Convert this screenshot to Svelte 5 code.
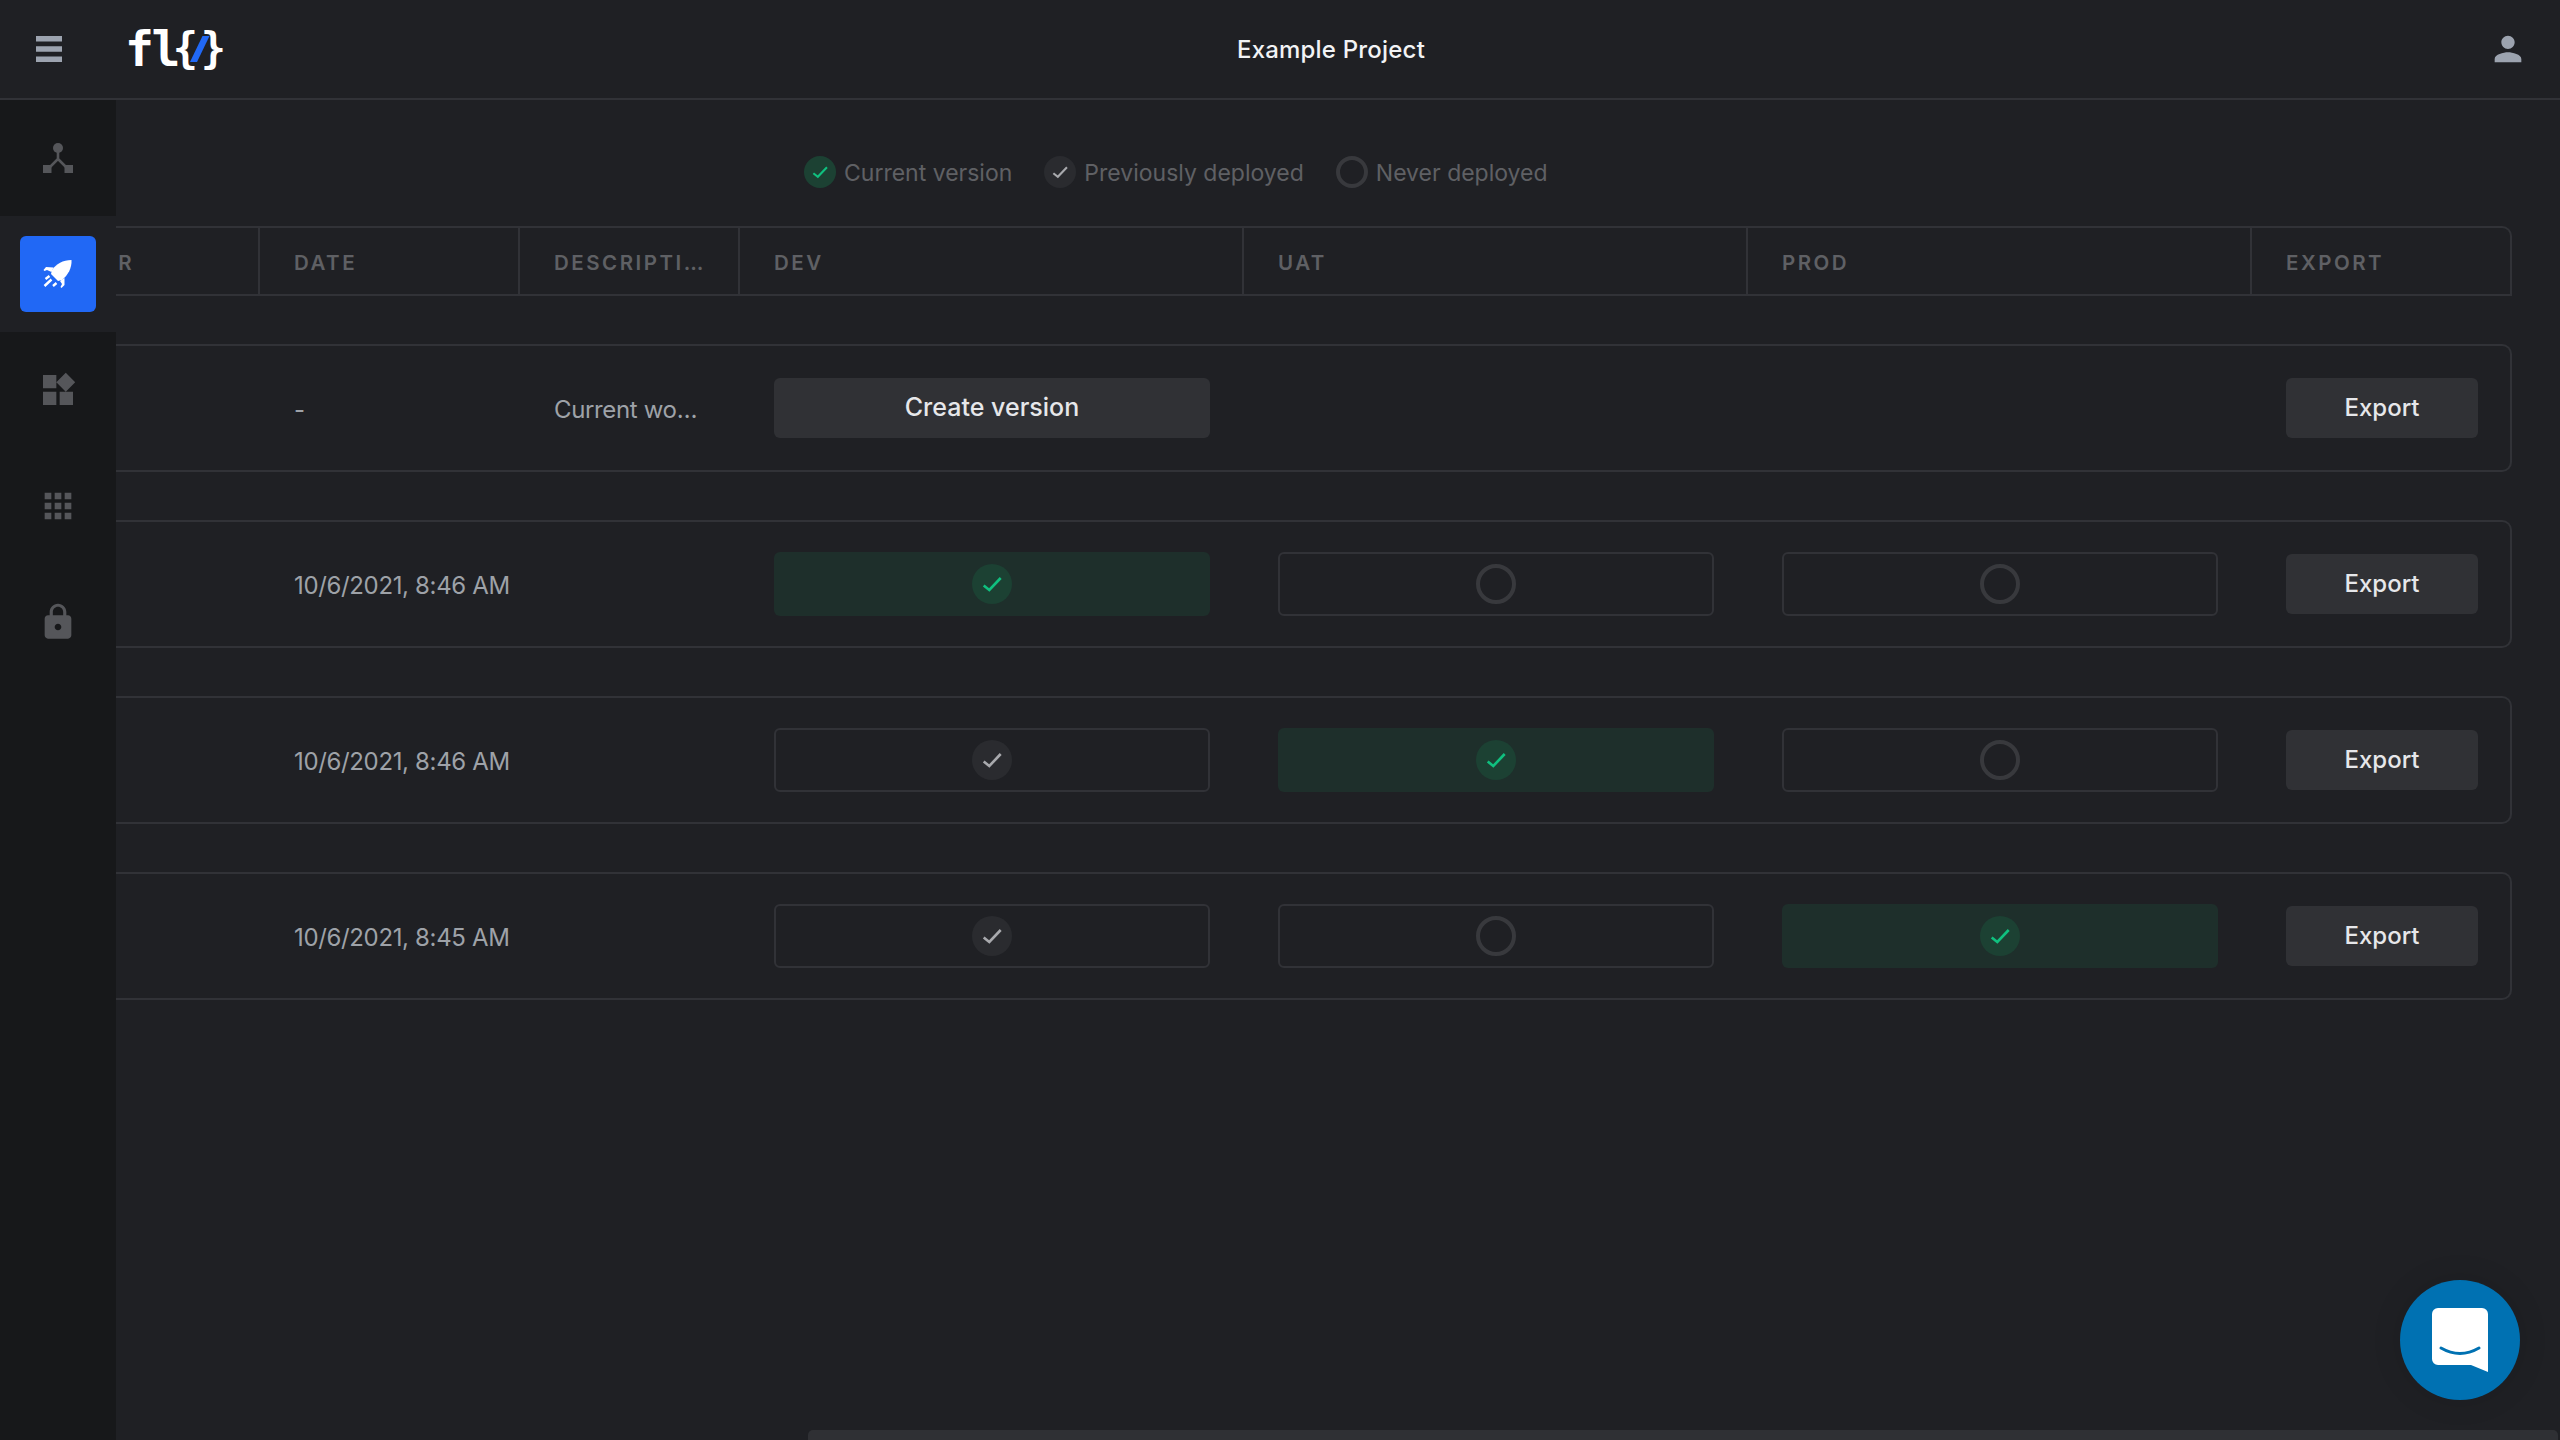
<script>
  const heads = ['DATE', 'DESCRIPTION', 'DEV', 'UAT', 'PROD', 'EXPORT'];
  const rows = [
    { date: '10/6/2021, 8:46 AM', st: ['cur', 'none', 'none'] },
    { date: '10/6/2021, 8:46 AM', st: ['prev', 'cur', 'none'] },
    { date: '10/6/2021, 8:45 AM', st: ['prev', 'none', 'cur'] }
  ];
</script>

{#snippet mark(kind)}
  {#if kind === 'none'}
    <span class="mark none"></span>
  {:else}
    <span class="mark {kind}">
      <svg viewBox="0 0 40 40"><path d="M11.7 21.5l5.6 4.5L28.7 14" /></svg>
    </span>
  {/if}
{/snippet}

<div class="app">
  <header class="top">
    <div class="brand">
      <svg class="burger" viewBox="0 0 26 26"><path d="M0 0h26v5.5H0zM0 10.3h26v5.4H0zM0 20.5h26V26H0z" /></svg>
      <div class="logo">
        <span class="fl">fl</span><span class="brace">&#123;</span><svg class="slash" viewBox="0 0 20 26"><path d="M12.500 0h7L7 26H0z" /></svg><span class="brace">&#125;</span>
      </div>
    </div>
    <div class="title">Example Project</div>
    <div class="user">
      <svg viewBox="0 0 24 24"><path d="M12 12c2.21 0 4-1.79 4-4s-1.79-4-4-4-4 1.79-4 4 1.79 4 4 4zm0 2c-2.67 0-8 1.34-8 4v2h16v-2c0-2.66-5.33-4-8-4z" /></svg>
    </div>
  </header>

  <div class="body">
    <nav class="side">
      <div class="item">
        <svg viewBox="0 0 40 40">
          <circle cx="20" cy="10" r="5" />
          <path d="M5 27h8.5v8H5zM26.5 27H35v8h-8.5z" />
          <path class="ln" d="M20 14v7l-9 9M20 21l9 9" />
        </svg>
      </div>
      <div class="item on">
        <div class="rocket">
          <svg viewBox="0 0 30 30">
            <path d="M28.500 1C20 1 13 5 9 11l-1 4 7 7 4-1c6-5 10-12 9.500-20z" />
            <path d="M10.500 8.500L3 8 .5 11l1 1L4 11l4.500 2zM21.500 19v7l-3 3-1-1 1.500-3-2-3z" />
            <path class="st" d="M2.500 20l4-3M1.500 27l7-6.500M10 27l3.500-3" />
          </svg>
        </div>
      </div>
      <div class="item">
        <svg viewBox="0 0 24 24"><path d="M13 13v8h8v-8h-8zM3 21h8v-8H3v8zM3 3v8h8V3H3zm13.660-1.310L11 7.340 16.660 13l5.660-5.660-5.660-5.650z" /></svg>
      </div>
      <div class="item">
        <svg viewBox="0 0 24 24"><path d="M4 8h4V4H4v4zm6 12h4v-4h-4v4zm-6 0h4v-4H4v4zm0-6h4v-4H4v4zm6 0h4v-4h-4v4zm6-10v4h4V4h-4zm-6 4h4V4h-4v4zm6 6h4v-4h-4v4zm0 6h4v-4h-4v4z" /></svg>
      </div>
      <div class="item">
        <svg viewBox="0 0 24 24"><path d="M18 8h-1V6c0-2.760-2.240-5-5-5S7 3.240 7 6v2H6c-1.100 0-2 .9-2 2v10c0 1.100.9 2 2 2h12c1.100 0 2-.9 2-2V10c0-1.100-.9-2-2-2zm-6 9c-1.100 0-2-.9-2-2s.9-2 2-2 2 .9 2 2-.9 2-2 2zm3.100-9H8.900V6c0-1.710 1.390-3.100 3.100-3.100 1.710 0 3.100 1.390 3.100 3.100v2z" /></svg>
      </div>
      <div class="rest"></div>
    </nav>

    <main class="main">
      <div class="legend">
        {@render mark('cur')}<span class="lt">Current version</span>
        {@render mark('prev')}<span class="lt">Previously deployed</span>
        {@render mark('none')}<span class="lt">Never deployed</span>
      </div>

      <div class="grid head">
        <div class="hc first"><span>AUTHOR</span></div>
        {#each heads as h}
          <div class="hc"><span class="clip">{h}</span></div>
        {/each}
      </div>

      <div class="grid row">
        <div class="c"></div>
        <div class="c txt">-</div>
        <div class="c txt"><span class="clip">Current working version</span></div>
        <div class="c"><button class="btn wide">Create version</button></div>
        <div class="c"></div>
        <div class="c"></div>
        <div class="c"><button class="btn">Export</button></div>
      </div>

      {#each rows as r}
        <div class="grid row">
          <div class="c"></div>
          <div class="c txt">{r.date}</div>
          <div class="c"></div>
          {#each r.st as s}
            <div class="c">
              <div class="stat {s}">{@render mark(s)}</div>
            </div>
          {/each}
          <div class="c"><button class="btn">Export</button></div>
        </div>
      {/each}
    </main>
  </div>

  <div class="thumb"></div>
  <div class="chat">
    <svg viewBox="0 0 56 64">
      <path class="bub" d="M0 6a6 6 0 0 1 6-6h44a6 6 0 0 1 6 6v58l-17-7H6a6 6 0 0 1-6-6z" />
      <path class="smile" d="M9 40q19 11 38 0" />
    </svg>
  </div>
</div>

<style>
  :global(body) {
    margin: 0;
    background: #1f2024;
  }
  .app {
    width: 2560px;
    height: 1440px;
    overflow: hidden;
    display: flex;
    flex-direction: column;
    background: #1f2024;
    font-family: Inter, "Liberation Sans", sans-serif;
  }
  .top {
    height: 100px;
    box-sizing: border-box;
    border-bottom: 2px solid #313237;
    display: flex;
    align-items: center;
    flex: none;
  }
  .brand {
    width: 222px;
    display: flex;
    align-items: center;
    flex: none;
    padding-left: 36px;
    box-sizing: border-box;
  }
  .burger {
    width: 26px;
    height: 26px;
    fill: #9ca3af;
    flex: none;
  }
  .logo {
    margin-left: 63px;
    display: flex;
    align-items: center;
    color: #fff;
    font-family: "DejaVu Sans Mono", monospace;
    font-weight: 700;
    line-height: 40px;
    height: 40px;
    flex: none;
  }
  .fl {
    font-size: 48px;
    letter-spacing: -2.500px;
  }
  .brace {
    font-size: 42px;
    width: 15px;
    display: flex;
    justify-content: center;
  }
  .slash {
    width: 20px;
    height: 26px;
    fill: #2168f5;
    margin: 0 -4px 0 -3px;
    flex: none;
  }
  .title {
    flex: 1;
    text-align: center;
    color: #f2f3f5;
    font-size: 24px;
    font-weight: 500;
    letter-spacing: 0.200px;
  }
  .user {
    width: 120px;
    flex: none;
    display: flex;
    justify-content: flex-end;
    padding-right: 32px;
    box-sizing: border-box;
  }
  .user svg {
    width: 40px;
    height: 40px;
    fill: #9ca3af;
  }
  .body {
    flex: 1;
    display: flex;
    min-height: 0;
  }
  .side {
    width: 116px;
    flex: none;
    display: flex;
    flex-direction: column;
  }
  .item {
    height: 116px;
    flex: none;
    background: #17181a;
    display: flex;
    align-items: center;
    justify-content: center;
  }
  .item svg {
    width: 40px;
    height: 40px;
    fill: #55565a;
  }
  .ln {
    fill: none;
    stroke: #55565a;
    stroke-width: 2.600;
  }
  .item.on {
    background: #1f2024;
  }
  .rocket {
    width: 76px;
    height: 76px;
    border-radius: 6px;
    background: #2168f5;
    display: flex;
    align-items: center;
    justify-content: center;
  }
  .rocket svg {
    width: 30px;
    height: 30px;
    fill: #fff;
  }
  .st {
    fill: none;
    stroke: #fff;
    stroke-width: 2.400;
  }
  .rest {
    flex: 1;
    background: #17181a;
  }
  .main {
    flex: 1;
    min-width: 0;
    overflow: hidden;
    padding-top: 56px;
  }
  .legend {
    display: flex;
    align-items: center;
    height: 32px;
    margin-left: 688px;
    margin-bottom: 38px;
  }
  .legend .mark {
    width: 32px;
    height: 32px;
  }
  .lt {
    margin: 0 32px 0 8px;
    padding-top: 1px;
    font-size: 23px;
    color: #5f6064;
    white-space: nowrap;
  }
  .grid {
    display: grid;
    grid-template-columns: 144px 260px 220px 504px 504px 504px 258px;
    width: 2396px;
    box-sizing: border-box;
    border: 2px solid #313237;
    border-left: 0;
  }
  .head {
    height: 70px;
    border-top-right-radius: 10px;
    margin-bottom: 48px;
  }
  .hc {
    display: flex;
    align-items: center;
    padding: 2px 34px 0;
    box-sizing: border-box;
    border-right: 2px solid #313237;
    min-width: 0;
    overflow: hidden;
    color: #5f6064;
    font-size: 20.500px;
    font-weight: 600;
    letter-spacing: 2.500px;
  }
  .hc:last-child {
    border-right: 0;
  }
  .hc.first {
    justify-content: flex-end;
    padding: 2px 124px 0 0;
  }
  .hc.first span {
    flex: none;
  }
  .clip {
    display: block;
    min-width: 0;
    overflow: hidden;
    white-space: nowrap;
    text-overflow: ellipsis;
  }
  .row {
    height: 128px;
    border-radius: 0 10px 10px 0;
    margin-bottom: 48px;
  }
  .c {
    display: flex;
    align-items: center;
    padding: 0 34px;
    box-sizing: border-box;
    min-width: 0;
  }
  .txt {
    color: #9ea2a8;
    font-size: 24px;
    letter-spacing: -0.350px;
    white-space: nowrap;
    padding-top: 2px;
  }
  .btn {
    appearance: none;
    border: 0;
    width: 192px;
    height: 60px;
    flex: none;
    border-radius: 6px;
    background: #303135;
    color: #e6e7ea;
    font: 500 24px Inter, "Liberation Sans", sans-serif;
    padding: 0 0 2px;
  }
  .btn.wide {
    width: 436px;
    font-size: 25px;
  }
  .stat {
    width: 436px;
    height: 64px;
    flex: none;
    box-sizing: border-box;
    border-radius: 6px;
    border: 2px solid #313237;
    display: flex;
    align-items: center;
    justify-content: center;
  }
  .stat.cur {
    border: 0;
    background: #1e2f2b;
  }
  .mark {
    width: 40px;
    height: 40px;
    border-radius: 50%;
    box-sizing: border-box;
    display: flex;
    flex: none;
  }
  .mark svg {
    width: 100%;
    height: 100%;
    fill: none;
    stroke-width: 2.600;
  }
  .mark.cur {
    background: #1c4133;
  }
  .mark.cur svg {
    stroke: #10c07f;
  }
  .mark.prev {
    background: #2a2b2f;
  }
  .mark.prev svg {
    stroke: #a8a9ad;
  }
  .mark.none {
    border: 4px solid #38393d;
  }
  .thumb {
    position: absolute;
    left: 808px;
    top: 1430px;
    width: 1750px;
    height: 10px;
    border-radius: 5px 5px 0 0;
    background: #2f3034;
  }
  .chat {
    position: absolute;
    left: 2400px;
    top: 1280px;
    width: 120px;
    height: 120px;
    border-radius: 50%;
    background: #0071b2;
    box-shadow: 0 0 30px rgba(0, 0, 0, 0.12);
    display: flex;
    align-items: center;
    justify-content: center;
  }
  .chat svg {
    width: 56px;
    height: 64px;
  }
  .bub {
    fill: #fff;
  }
  .smile {
    fill: none;
    stroke: #0071b2;
    stroke-width: 3;
    stroke-linecap: round;
  }
</style>
